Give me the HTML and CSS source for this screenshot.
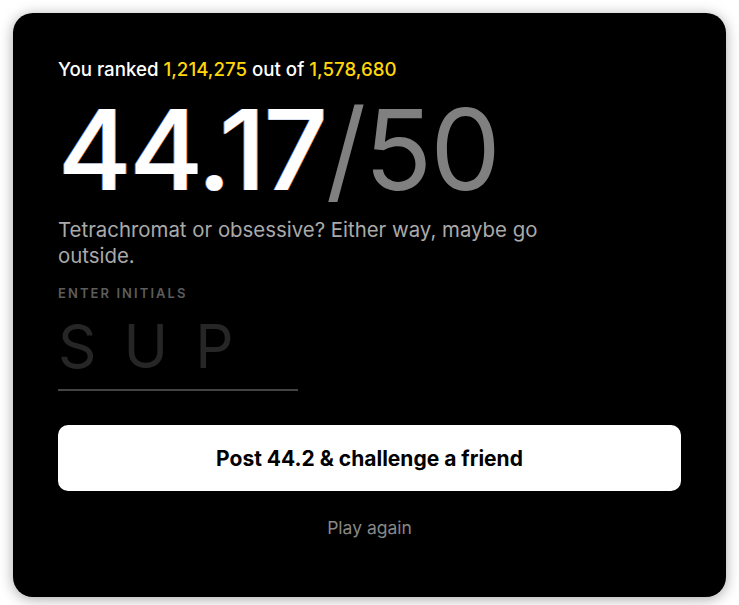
FILE: index.html
```html
<!DOCTYPE html>
<html lang="en">
<head>
  <meta charset="UTF-8">
  <meta name="viewport" content="width=device-width, initial-scale=1.0">
  <title>Result</title>
  <link rel="stylesheet" href="styles.css">
</head>
<body>
  <div class="card">
    <p class="rank">You ranked <span class="hl">1,214,275</span> out of <span class="hl">1,578,680</span></p>
    <div class="score"><span class="value">44.17</span><span class="max">/50</span></div>
    <p class="quip">Tetrachromat or obsessive? Either way, maybe go outside.</p>

    <label class="label" for="initials">Enter initials</label>
    <input class="initials" id="initials" type="text" maxlength="3" placeholder="SUP">

    <button class="post">Post 44.2 &amp; challenge a friend</button>
    <button class="again">Play again</button>
  </div>
</body>
</html>
```

FILE: styles.css
```css
body {
  margin: 0;
  padding: 13px;
  background: #fff;
  font-family: Inter, "Noto Sans", sans-serif;
}

.card {
  background: #000;
  color: #fff;
  border-radius: 20px;
  padding: 45px 45px 59px;
  box-shadow: 0 2px 14px rgba(0, 0, 0, 0.35);
  display: flex;
  flex-direction: column;
  align-items: flex-start;
}

.rank {
  margin: 0;
  font-size: 18.7px;
  line-height: 24px;
  font-weight: 500;
}

.rank .hl {
  color: #ffd60a;
}

.score {
  margin-top: 11px;
  font-size: 112px;
  line-height: 1;
  letter-spacing: -2px;
}

.score .value {
  font-weight: 450;
  text-shadow: -1px 0 #2a7fff, 1px 0 #ff7a1a;
}

.score .max {
  color: #808080;
  font-weight: 400;
}

.quip {
  margin: 12px 0 0;
  max-width: 500px;
  font-size: 20.4px;
  line-height: 26px;
  color: #aaa;
}

.label {
  margin-top: 16px;
  font-size: 13px;
  font-weight: 600;
  letter-spacing: 0.16em;
  text-transform: uppercase;
  color: #5c5c5c;
}

.initials {
  margin-top: 12px;
  width: 240px;
  padding: 0 0 10px;
  background: none;
  border: none;
  border-bottom: 2px solid #444;
  outline: none;
  font-family: inherit;
  font-size: 60px;
  line-height: 66px;
  letter-spacing: 0.45em;
  color: #fff;
}

.initials::placeholder {
  color: #262626;
}

.post {
  margin-top: 34px;
  align-self: stretch;
  height: 66px;
  border: none;
  border-radius: 10px;
  background: #fff;
  color: #000;
  font-family: inherit;
  font-size: 21px;
  font-weight: 700;
  cursor: pointer;
}

.again {
  margin-top: 26px;
  align-self: center;
  background: none;
  border: none;
  padding: 0;
  font-family: inherit;
  font-size: 17.5px;
  color: #888;
  cursor: pointer;
}
```
